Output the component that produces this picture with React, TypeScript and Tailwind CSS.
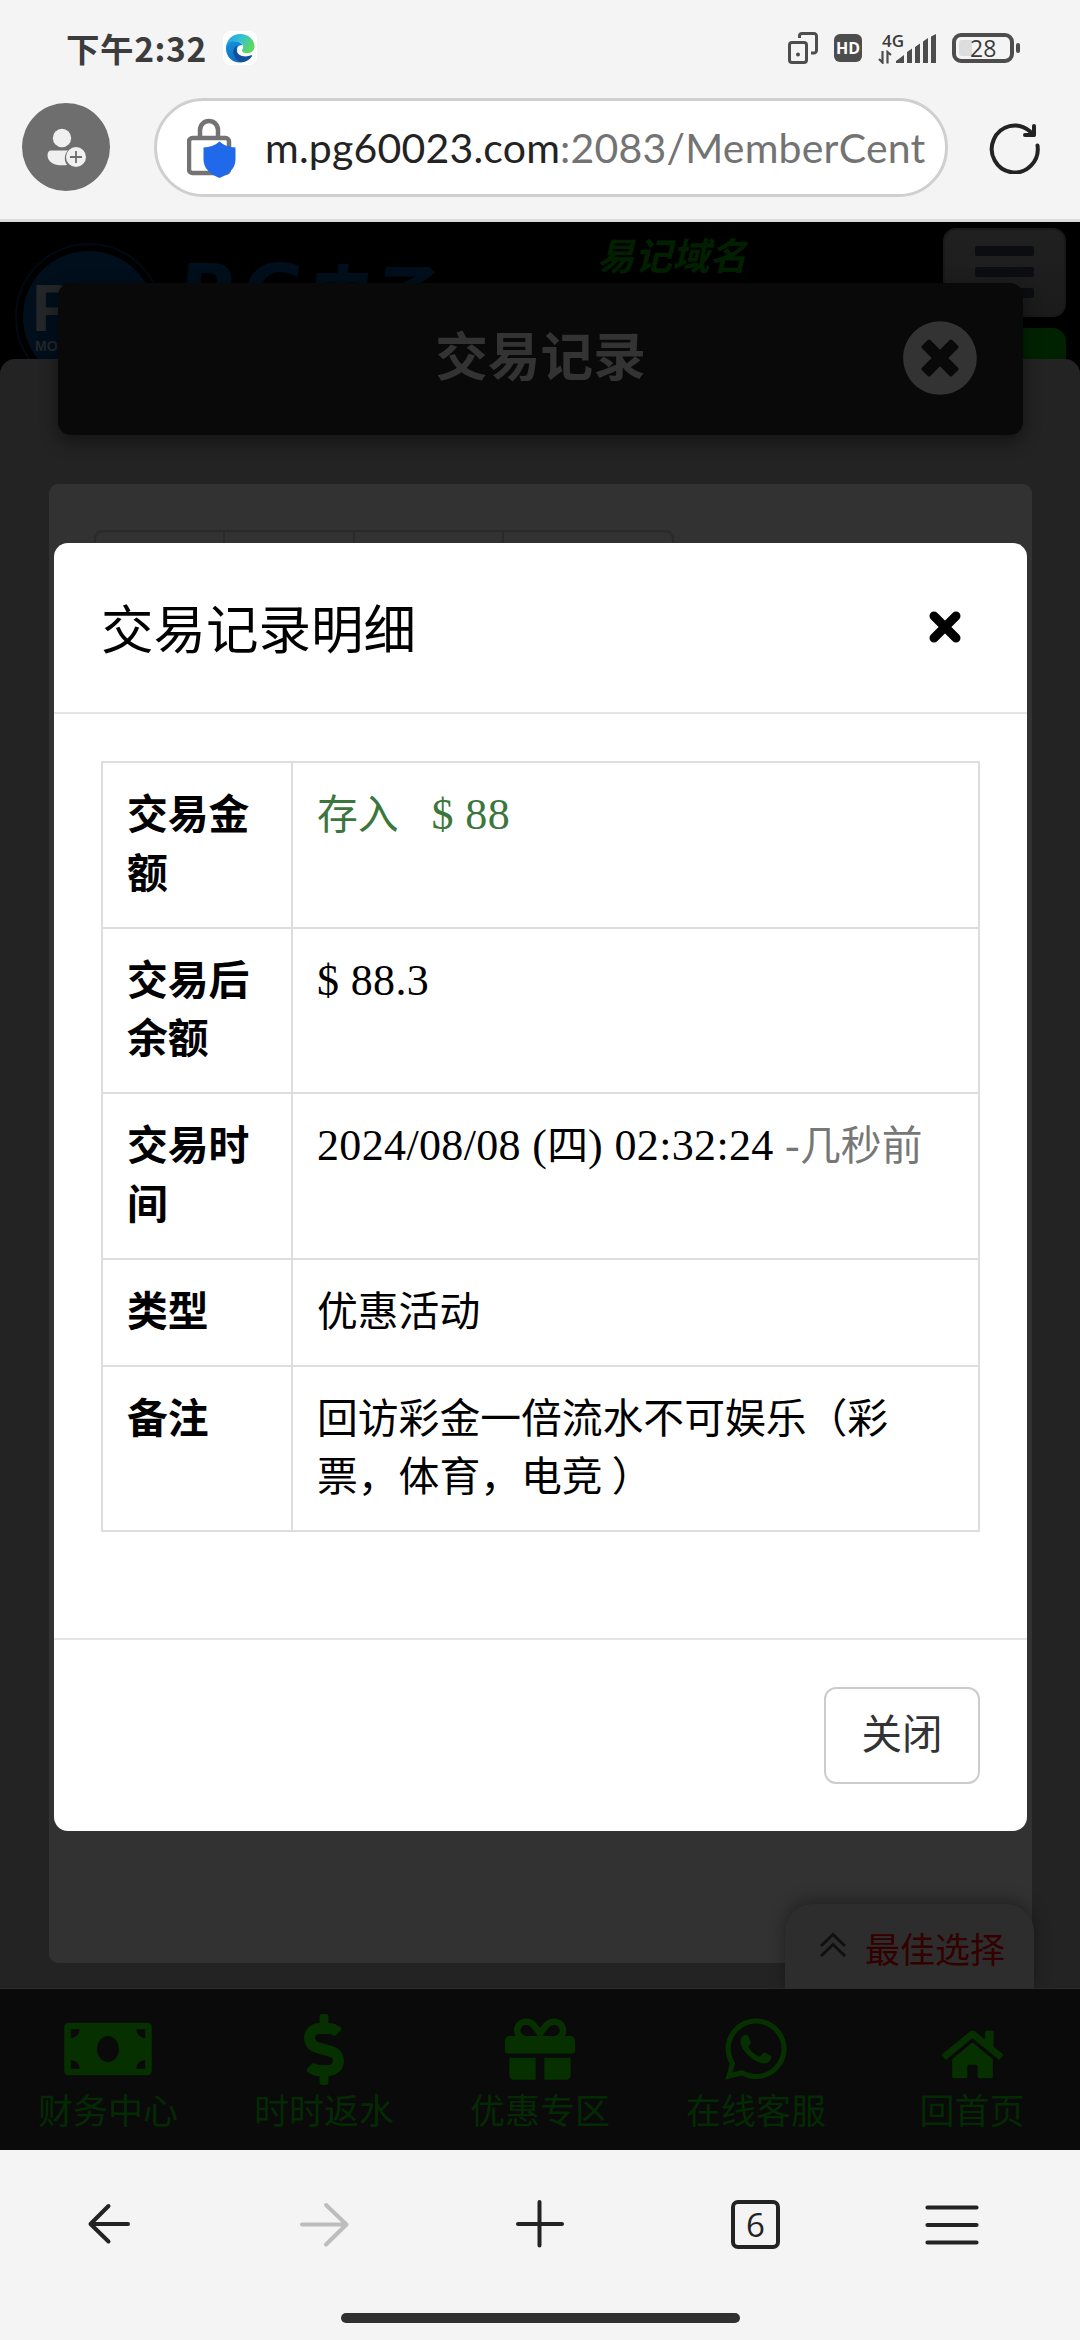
import React from 'react';
import {
  FaDollarSign,
  FaGift,
  FaHome,
  FaMoneyBill,
  FaTimesCircle,
  FaWhatsapp,
} from 'react-icons/fa';

interface DetailRow {
  label: string;
  value: React.ReactNode;
}

// Latin digits are set in a serif face, Chinese falls through to the CJK family.
function Num({ children }: { children: React.ReactNode }) {
  return (
    <span className="font-['Liberation_Serif','Noto_Sans_CJK_SC',serif] text-[44px] leading-none tracking-[0.35px]">
      {children}
    </span>
  );
}

const DETAIL_ROWS: DetailRow[] = [
  {
    label: '交易金额',
    value: (
      <span className="text-[#3c763d]">
        存入<span className="ml-[33px]"><Num>$ 88</Num></span>
      </span>
    ),
  },
  { label: '交易后余额', value: <Num>$ 88.3</Num> },
  {
    label: '交易时间',
    value: (
      <span className="whitespace-nowrap">
        <Num>2024/08/08 (</Num>四<Num>) 02:32:24 </Num>
        <span className="text-[#777777]"><Num>-</Num>几秒前</span>
      </span>
    ),
  },
  { label: '类型', value: '优惠活动' },
  { label: '备注', value: '回访彩金一倍流水不可娱乐（彩票，体育，电竞 ）' },
];

const NAV_ITEMS = [
  { label: '财务中心', icon: <FaMoneyBill className="h-[70px] w-[88px]" /> },
  { label: '时时返水', icon: <FaDollarSign className="h-[71px] w-[40px]" /> },
  { label: '优惠专区', icon: <FaGift className="h-[70px] w-[70px]" /> },
  { label: '在线客服', icon: <FaWhatsapp className="h-[70px] w-[62px]" /> },
  { label: '回首页', icon: <FaHome className="mt-[10px] h-[55px] w-[61px]" /> },
];

function StatusBar() {
  return (
    <div className="flex h-[96px] items-center pl-[66px] pr-[60px] text-[#3c3c3c]">
      <span className="w-[140px] whitespace-nowrap text-[33.500px] font-bold leading-none tracking-[0.6px]">下午2:32</span>
      <svg className="ml-[17px]" width="34" height="34" viewBox="0 0 34 34">
        <defs>
          <linearGradient id="edge-top" x1="0" y1="0" x2="1" y2="0.5">
            <stop offset="0" stopColor="#1c9be0" />
            <stop offset="0.5" stopColor="#33c1d6" />
            <stop offset="1" stopColor="#5fd95c" />
          </linearGradient>
          <linearGradient id="edge-left" x1="0" y1="0" x2="0.4" y2="1">
            <stop offset="0" stopColor="#1593dd" />
            <stop offset="1" stopColor="#0f6cc0" />
          </linearGradient>
        </defs>
        <rect width="34" height="34" rx="8" fill="#fff" />
        <path d="M3 16.5C3.6 8.500 9.500 3 17.200 3c8 0 14.300 5.600 14.300 12.300 0 4-3 6.900-7 6.900-3.600 0-5.500-1.500-5.500-2.800 0-.8 1.200-1.300 1.200-3.600 0-3-3-5.300-7.200-5.300-4.500 0-8 2.500-10 6z" fill="url(#edge-top)" />
        <path d="M3 17.500c0-4.500 4-7.200 8.800-7.200 4 0 7 2 8 4.200-1.500-.9-5.800-.3-5.800 4.500 0 6 5 10.500 11 9.500-2.500 2-5.500 3-8 3C9 31.500 3 25.500 3 17.500z" fill="url(#edge-left)" />
        <path d="M14 14.500c-3.500 2-4.500 6-3 9.800 1.500 4 4.500 6.500 7.500 7 4.500-.3 8-2.600 10.500-6.100.5-.8-.2-1.300-1-.9-5.500 2.500-14.500.7-14.500-5.600 0-1.700.3-3 .5-4.200z" fill="#12509b" />
      </svg>
      <div className="ml-auto flex items-center">
        <svg width="30" height="32" viewBox="0 0 30 32" fill="none" stroke="#4d4d4d" strokeWidth="3">
          <rect x="1.500" y="10.500" width="17" height="20" rx="2.500" />
          <path d="M11.500 6V4a2.500 2.500 0 0 1 2.500-2.500h12A2.500 2.500 0 0 1 28.500 4v14.500A2.500 2.500 0 0 1 26 21h-3" />
          <circle cx="10" cy="22.500" r="2" fill="#4d4d4d" stroke="none" />
        </svg>
        <span className="ml-[16px] flex h-[28px] w-[28px] items-center justify-center rounded-[6px] bg-[#4d4d4d] font-['Open_Sans',sans-serif] text-[16px] font-bold leading-none text-white">
          HD
        </span>
        <div className="ml-[16px] flex h-[32px] items-end">
          <div className="flex w-[18px] flex-col">
            <span className="ml-[4px] font-['Open_Sans',sans-serif] text-[17px] font-semibold leading-[18px]">4G</span>
            <svg width="14" height="14" viewBox="0 0 14 14" fill="none" stroke="#4d4d4d" strokeWidth="2.200">
              <path d="M4.500 1v11.500L1 9M9.500 13.500V2L13 5" />
            </svg>
          </div>
          <svg width="40" height="30" viewBox="0 0 40 30" fill="#4d4d4d">
            <path d="M0 29v-2l8-6v8zM11 18l5-3.500V29h-5zM19 13l5-3.500V29h-5zM27 7.500l5-3.500V29h-5zM35 2.500 40 0v29h-5z" />
          </svg>
        </div>
        <div className="ml-[16px] flex items-center">
          <div className="flex h-[30px] w-[62px] items-center rounded-[9px] border-4 border-[#4d4d4d] pl-[3px]">
            <div className="h-[16px] w-[13px] rounded-l-[3px] bg-[#dddddd]" />
            <span className="-ml-[2px] font-['Open_Sans',sans-serif] text-[23px] font-medium leading-none">28</span>
          </div>
          <div className="ml-[2px] h-[10px] w-[4px] rounded-[2px] bg-[#4d4d4d]" />
        </div>
      </div>
    </div>
  );
}

function AddressBar() {
  return (
    <div className="flex h-[126px] items-start border-b-[3px] border-[#dadbdb] pl-[22px] pt-[2px]">
      <div className="mt-[5px] flex h-[88px] w-[88px] items-center justify-center rounded-full bg-[#6e6e6e]">
        <svg width="88" height="88" viewBox="0 0 88 88" fill="#f0f0f0">
          <circle cx="40" cy="35" r="9.200" />
          <path d="M29 47.500h17c-4 4-4 10-1 14.500-2 .3-3 .3-4.500.3-9 0-15-3.300-15-10.300 0-2.500 1.500-4.500 3.500-4.500z" />
          <circle cx="54" cy="54" r="10" />
          <path d="M54 48v12M48 54h12" stroke="#6e6e6e" strokeWidth="1.800" />
        </svg>
      </div>
      <div className="ml-[44px] flex h-[99px] w-[794px] items-center overflow-hidden rounded-full border-[3px] border-[#cfcfcf] bg-white pl-[30px]">
        <svg className="shrink-0" width="50" height="60" viewBox="0 0 50 60" fill="none">
          <rect x="2" y="20" width="40" height="35" rx="3.500" stroke="#737373" strokeWidth="4.500" />
          <path d="M13 19v-7a9 9 0 0 1 18 0v7" stroke="#737373" strokeWidth="4.500" />
          <path d="M32.500 23.500c5 4.500 10 5.500 16 6v12c0 9-7 15-16 18.500-9-3.500-16-9.500-16-18.500v-12c6-.5 11-1.500 16-6z" fill="#2069ea" />
        </svg>
        <span className="ml-[28px] whitespace-nowrap font-['Lato',sans-serif] text-[41px] leading-none tracking-[0.200px] text-[#737373]">
          <span className="text-[#232323]">m.pg60023.com</span>:2083/MemberCent
        </span>
      </div>
      <svg className="ml-[41px] mt-[24px]" width="52" height="52" viewBox="0 0 52 52" fill="none" stroke="#232323" strokeWidth="4" strokeLinecap="round" strokeLinejoin="round">
        <path d="M48.500 23.500a23 23.500 0 1 1-8-14.500l4 4" />
        <path d="M45 4v9h-9" />
      </svg>
    </div>
  );
}

function SiteHeader() {
  return (
    <header className="flex h-[137px] items-start overflow-hidden pl-[15px] pr-[14px]">
      <div className="mt-[21px] h-[148px] w-[148px] shrink-0 rounded-full border-2 border-[#010a13] p-[6px]">
        <div className="flex h-full w-full flex-col items-start rounded-full bg-[#010f1c] pl-[9px] pt-[27px] font-['Liberation_Sans',sans-serif] font-bold text-[#242628]">
          <span className="text-[66px] leading-[60px]">P</span>
          <span className="pl-[3px] text-[14px] leading-[16px]">MOBILE</span>
        </div>
      </div>
      <div className="ml-[16px] mt-[31px] flex w-[266px] shrink-0 -skew-x-6 whitespace-nowrap text-[66px] font-black leading-[76px] text-[#010f1c]">
        <span className="w-[64px] font-['DejaVu_Sans',sans-serif] text-[74px]">P</span>
        <span className="w-[65px] font-['DejaVu_Sans',sans-serif] text-[74px]">G</span>
        <span>电子</span>
      </div>
      <span className="ml-[152px] mt-[10px] shrink-0 whitespace-nowrap text-[37.500px] font-bold italic leading-[44px] text-[#002000]">易记域名</span>
      <div className="ml-auto flex flex-col items-end">
        <div className="mt-[6px] flex h-[89px] w-[123px] flex-col items-center gap-[11px] rounded-[13px] border-2 border-[#191919] bg-linear-to-b from-[#202020] to-[#1b1b1b] pt-[16px]">
          <div className="h-[10px] w-[59px] rounded-[2px] bg-[#0b0d10]" />
          <div className="h-[10px] w-[59px] rounded-[2px] bg-[#0b0d10]" />
          <div className="h-[10px] w-[59px] rounded-[2px] bg-[#0b0d10]" />
        </div>
        <div className="mt-[11px] h-[60px] w-[123px] rounded-[13px] bg-[#002200]" />
      </div>
    </header>
  );
}

function PageTitle() {
  return (
    <div className="absolute left-[58px] top-[61px] flex h-[152px] w-[965px] items-center rounded-[13px] bg-[#090909] pr-[45px] shadow-[0_6px_18px_rgba(0,0,0,0.45)]">
      <h1 className="flex-1 pb-[10px] pl-[47px] text-center text-[52.700px] font-bold text-[#333333]">
        <span className="pl-[74px]">交易记录</span>
      </h1>
      <FaTimesCircle className="-mt-[2px] h-[76px] w-[76px] text-[#333333]" />
    </div>
  );
}

function BottomNav() {
  return (
    <nav className="relative grid h-[162px] grid-cols-5 border-t border-[#2b2b2b] bg-[#0a0a0a]">
      {NAV_ITEMS.map((item) => (
        <div key={item.label} className="flex flex-col items-center text-[#063000]">
          <div className="mt-[24px] flex h-[72px] items-center">{item.icon}</div>
          <span className="mt-[4px] text-[35px] leading-[40px] text-[#032a03]">{item.label}</span>
        </div>
      ))}
      <div className="absolute -top-[85px] left-[785px] flex h-[85px] w-[249px] items-center rounded-t-[28px] bg-[#2d2d2d] pl-[34px] shadow-[0_-4px_16px_rgba(0,0,0,0.35)] [clip-path:inset(-30px_-30px_0_-30px)]">
        <svg className="-mt-[4px]" width="28" height="26" viewBox="0 0 28 26" fill="none" stroke="#101010" strokeWidth="3">
          <path d="M2 14 14 2.500 26 14M2 24 14 12.500 26 24" />
        </svg>
        <span className="ml-[18px] mt-[2px] text-[35px] leading-none text-[#330000]">最佳选择</span>
      </div>
    </nav>
  );
}

function DetailModal() {
  return (
    <div className="absolute left-[54px] top-[321px] flex h-[1288px] w-[973px] flex-col rounded-[14px] bg-white text-[40.800px] leading-[58.500px] text-black">
      <div className="flex h-[171px] items-center justify-between border-b-2 border-[#e5e5e5] pl-[47px] pr-[66px]">
        <h2 className="pb-[2px] text-[52.500px]">交易记录明细</h2>
        <svg className="mb-[2px]" width="32" height="32" viewBox="0 0 32 32" stroke="#000" strokeWidth="9" strokeLinecap="round">
          <path d="M5 5 27 27M27 5 5 27" />
        </svg>
      </div>
      <div className="flex-1 px-[47px] pt-[47px]">
        <table className="w-full table-fixed border-collapse">
          <tbody>
            {DETAIL_ROWS.map((row) => (
              <tr key={row.label}>
                <th className="w-[190px] border-2 border-[#dddddd] px-[24px] pb-[26.500px] pt-[20px] text-left align-top font-bold">
                  {row.label}
                </th>
                <td className="border-2 border-[#dddddd] px-[24px] pb-[26.500px] pt-[20px] align-top">{row.value}</td>
              </tr>
            ))}
          </tbody>
        </table>
      </div>
      <div className="flex h-[193px] items-start justify-end border-t-2 border-[#e5e5e5] pr-[47px] pt-[47px]">
        <button type="button" className="h-[97px] w-[156px] rounded-[12px] border-2 border-[#cccccc] pb-[6px] text-[40.500px] text-[#333333]">
          关闭
        </button>
      </div>
    </div>
  );
}

function BrowserToolbar() {
  return (
    <div className="flex h-[190px] flex-col items-center bg-[#f4f4f4]">
      <div className="flex h-[163px] w-full items-start pt-[46px] text-[#232323]">
        <svg className="ml-[84px]" width="54" height="56" viewBox="0 0 54 56" fill="none" stroke="currentColor" strokeWidth="4" strokeLinecap="round" strokeLinejoin="round">
          <path d="M44 28H6.500M24.500 10 6.500 28 24.500 45.500" />
        </svg>
        <svg className="ml-[159px]" width="54" height="56" viewBox="0 0 54 56" fill="none" stroke="#bdbdbd" strokeWidth="4" strokeLinecap="round" strokeLinejoin="round">
          <path d="M5 28.500H49.500M29 9 49.500 28.500 29 48.500" />
        </svg>
        <svg className="ml-[161px]" width="54" height="56" viewBox="0 0 54 56" fill="none" stroke="currentColor" strokeWidth="4" strokeLinecap="round">
          <path d="M6 28H50M27.500 6V49.500" />
        </svg>
        <div className="ml-[165px] mt-[4px] flex h-[49px] w-[49px] items-center justify-center rounded-[7px] border-4 border-[#232323] font-['Open_Sans',sans-serif] text-[33px] leading-none">
          6
        </div>
        <svg className="ml-[145px]" width="54" height="56" viewBox="0 0 54 56" fill="none" stroke="currentColor" strokeWidth="4.200" strokeLinecap="round">
          <path d="M2.500 11.500H51.500M2.500 29H51.500M2.500 46.500H51.500" />
        </svg>
      </div>
      <div className="h-[10px] w-[399px] rounded-full bg-[#303030]" />
    </div>
  );
}

export default function App() {
  return (
    <div className="flex h-[2340px] w-[1080px] flex-col overflow-hidden bg-[#f4f4f4] font-['Noto_Sans_CJK_SC',sans-serif]">
      <StatusBar />
      <AddressBar />
      <main className="relative flex h-[1928px] flex-col overflow-hidden bg-black">
        <SiteHeader />
        <div className="z-0 flex-1 rounded-t-[15px] bg-[#232323] pl-[49px] pr-[48px] pt-[125px]">
          <div className="h-[1479px] rounded-[9px] bg-[#323232] px-[45px] pt-[46px]">
            <div className="flex h-[80px] w-[580px] rounded-[9px] border-2 border-[#2a2a2a]">
              <div className="w-[129px] border-r-2 border-[#2a2a2a]" />
              <div className="w-[130px] border-r-2 border-[#2a2a2a]" />
              <div className="w-[149px] border-r-2 border-[#2a2a2a]" />
            </div>
          </div>
        </div>
        <BottomNav />
        <PageTitle />
        <DetailModal />
      </main>
      <BrowserToolbar />
    </div>
  );
}
